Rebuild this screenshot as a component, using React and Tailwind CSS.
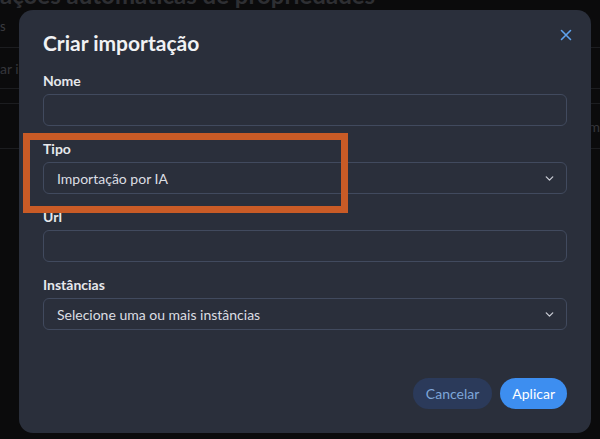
import React from "react";

function Chevron() {
  return (
    <svg width="13" height="13" viewBox="0 0 24 24" fill="none" stroke="#c9ccd4" strokeWidth="2.4" strokeLinecap="round" strokeLinejoin="round">
      <path d="M6 9l6 6 6-6" />
    </svg>
  );
}

function Field({ label, children }) {
  return (
    <div className="flex flex-col gap-[4px]">
      <label className="text-[14px] font-bold leading-[18px] text-[#e6e8ec]">{label}</label>
      {children}
    </div>
  );
}

function Input() {
  return <div className="h-[32px] rounded-[6px] border border-[#414a5e] bg-[#2a2f3b]" />;
}

function Select({ text }) {
  return (
    <div className="flex h-[32px] items-center justify-between rounded-[6px] border border-[#414a5e] bg-[#2a2f3b] pl-[13px] pr-[10px]">
      <span className="text-[14px] text-[#dcdee3]">{text}</span>
      <Chevron />
    </div>
  );
}

export default function App() {
  return (
    <div className="relative h-[439px] w-[600px] overflow-hidden bg-[#0b0b0c]" style={{ fontFamily: "Lato, 'Noto Sans', sans-serif" }}>
      {/* background page */}
      <div className="flex flex-col">
        <div className="-mt-[17px] whitespace-nowrap text-[24px] font-bold leading-[24px] text-[#2e2f33]">ações automáticas de propriedades</div>
        <div className="mt-[11px] text-[13px] leading-[16px] text-[#3a3b40]">s</div>
        <div className="mt-[13px] border-t border-[#1c1d20]" />
        <div className="flex h-[40px] items-center justify-between">
          <span className="text-[14px] text-[#35363b]">ar i</span>
        </div>
        <div className="border-t border-[#1c1d20]" />
        <div className="h-[14px]" />
        <div className="border-t border-[#1c1d20]" />
        <div className="flex h-[44px] items-center justify-end">
          <span className="text-[14px] text-[#35363b]">m</span>
        </div>
        <div className="border-t border-[#1c1d20]" />
      </div>

      {/* modal */}
      <div className="absolute inset-0 pl-[19px] pt-[10px]">
        <div className="relative flex h-[423px] w-[572px] flex-col rounded-[14px] bg-[#2a2f3b] px-[24px] pt-[21px]">
          <button className="absolute right-[19px] top-[19px] text-[#5ea3ee]">
            <svg width="12" height="12" viewBox="0 0 12 12" fill="none" stroke="currentColor" strokeWidth="1.6" strokeLinecap="round">
              <path d="M1.5 1.5l9 9M10.5 1.5l-9 9" />
            </svg>
          </button>
          <h2 className="text-[21px] font-bold leading-[24px] text-[#f1f2f4]">Criar importação</h2>
          <div className="mt-[17px] flex flex-col gap-[14px]">
            <Field label="Nome"><Input /></Field>
            <Field label="Tipo"><Select text="Importação por IA" /></Field>
            <Field label="Url"><Input /></Field>
            <Field label="Instâncias"><Select text="Selecione uma ou mais instâncias" /></Field>
          </div>
          <div className="mt-[48px] flex justify-end gap-[8px]">
            <button className="h-[31px] rounded-full bg-[#2b3a5a] px-[13px] text-[14px] text-[#7ea6d9]">Cancelar</button>
            <button className="h-[31px] rounded-full bg-[#3d8ef0] px-[12px] text-[14px] text-white">Aplicar</button>
          </div>
        </div>
      </div>

      {/* highlight box */}
      <div className="absolute left-[23px] top-[133px] h-[80px] w-[325px] border-[7px] border-[#c95b26]" />
    </div>
  );
}
